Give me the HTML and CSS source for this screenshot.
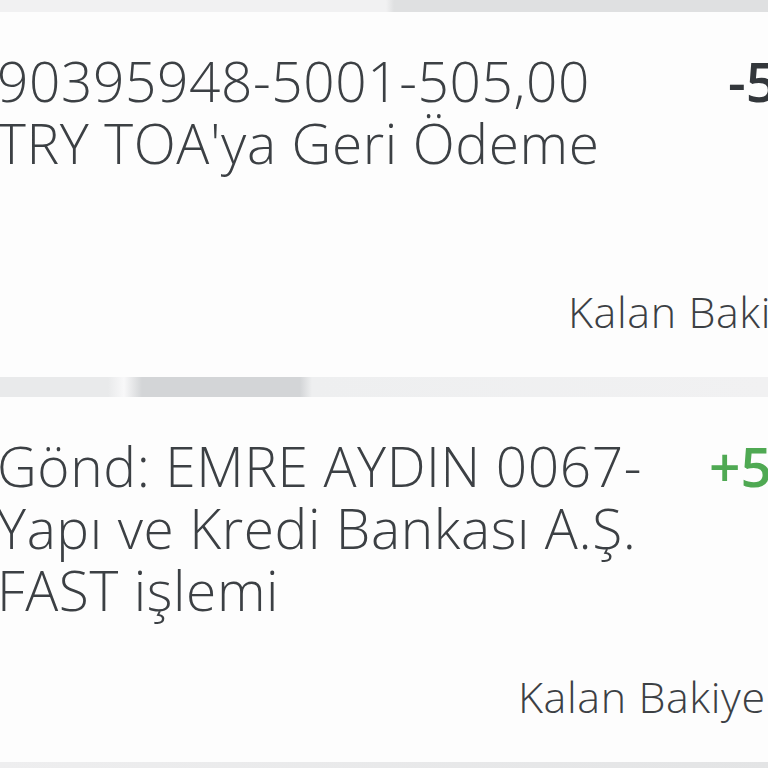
FILE: index.html
```html
<!DOCTYPE html>
<html lang="tr">
<head>
    <meta charset="UTF-8">
    <meta name="viewport" content="width=device-width, initial-scale=1.0">
    <title>Hesap Hareketleri</title>
    <link rel="stylesheet" href="styles.css">
</head>
<body>
    <div class="edge edge-top"></div>

    <!-- Giden islem -->
    <div class="tx">
        <div class="tx-main">
            <div class="tx-desc">90395948-5001-505,00<br>TRY TOA'ya Geri Ödeme</div>
            <div class="tx-amount out">-505,00 TL</div>
        </div>
        <div class="tx-balance first">Kalan Bakiye: 1.245,30 TL</div>
    </div>

    <div class="edge edge-mid"></div>

    <!-- Gelen islem -->
    <div class="tx">
        <div class="tx-main">
            <div class="tx-desc">Gönd: EMRE AYDIN 0067-<br>Yapı ve Kredi Bankası A.Ş.<br>FAST işlemi</div>
            <div class="tx-amount in">+500,00 TL</div>
        </div>
        <div class="tx-balance second">Kalan Bakiye: 1.750,30 TL</div>
    </div>

    <div class="edge edge-bottom"></div>
</body>
</html>
```

FILE: styles.css
```css
body {
    margin: 0;
    width: 768px;
    height: 768px;
    overflow: hidden;
    background-color: #fdfdfd;
    font-family: "Open Sans", "Liberation Sans", sans-serif;
    color: #3c4044;
}
.edge {
    width: 100%;
}
.edge-top {
    height: 12px;
    background: linear-gradient(to right, #f1f1f2 0, #f1f1f2 386px, #dfe0e1 394px, #dfe0e1 100%);
}
.edge-mid {
    height: 20px;
    background: linear-gradient(to right, #e9eaeb 0, #e9eaeb 108px, #f8f8f9 124px, #d3d5d7 142px, #d3d5d7 300px, #eeeff0 312px, #f1f1f2 100%);
}
.edge-bottom {
    height: 6px;
    background: linear-gradient(to right, #eeeeef 0, #e3e4e5 100%);
}
.tx {
    height: 365px;
    box-sizing: border-box;
    padding: 38px 0 40px 0;
    display: flex;
    flex-direction: column;
    background-color: #fdfdfd;
}
.tx-main {
    display: flex;
}
.tx-desc {
    width: 712px;
    flex-shrink: 0;
    margin-left: -3px;
    font-size: 55px;
    font-weight: 300;
    letter-spacing: 0.6px;
    line-height: 62px;
    white-space: nowrap;
}
.tx-amount {
    font-size: 55px;
    line-height: 62px;
    font-weight: 600;
    white-space: nowrap;
}
.tx-amount.out {
    color: #33373b;
    padding-left: 19px;
}
.tx-amount.in {
    color: #4fa953;
}
.tx-balance {
    margin-top: auto;
    font-size: 43px;
    font-weight: 300;
    letter-spacing: 0.6px;
    line-height: 50px;
    white-space: nowrap;
}
.tx-balance.first {
    padding-left: 568px;
}
.tx-balance.second {
    padding-left: 518px;
}
```
